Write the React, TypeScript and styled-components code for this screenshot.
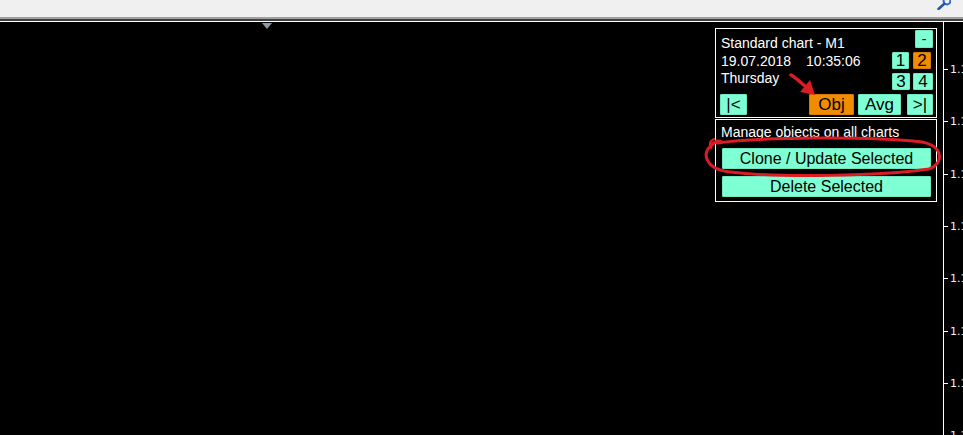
import React from "react";
import styled, { createGlobalStyle } from "styled-components";

const GlobalStyle = createGlobalStyle`
  html, body {
    margin: 0;
    padding: 0;
    background: #000;
    overflow: hidden;
  }
  body {
    font-family: "Liberation Sans", Arial, sans-serif;
  }
  * { box-sizing: border-box; }
`;

const Page = styled.div`
  width: 963px;
  height: 435px;
  display: flex;
  flex-direction: column;
  overflow: hidden;
`;

const Toolbar = styled.div`
  height: 19px;
  flex: none;
  background: #f0f0f0;
  border-bottom: 2px solid #a0a0a0;
  display: flex;
  justify-content: flex-end;
  align-items: flex-start;
  padding-right: 12px;
  overflow: hidden;
`;

const ChartFrame = styled.div`
  flex: 1;
  display: flex;
  flex-direction: column;
  border-top: 2px solid #404040;
  min-height: 0;
`;

const ChartRow = styled.div`
  flex: 1;
  display: flex;
  border-top: 1px solid #ffffff;
  min-height: 0;
`;

const Chart = styled.div`
  flex: 1;
  position: relative;
  display: flex;
  flex-direction: column;
  align-items: flex-end;
  padding: 6px 6px 0 0;
  background: #000;
`;

const ShiftMarker = styled.div`
  position: absolute;
  left: 262px;
  top: 1px;
  width: 0;
  height: 0;
  border-left: 5px solid transparent;
  border-right: 5px solid transparent;
  border-top: 6px solid #8b9aa6;
`;

const Panel = styled.div<{ $h: number; $gap?: number }>`
  width: 222px;
  height: ${(p) => p.$h}px;
  margin-top: ${(p) => p.$gap ?? 0}px;
  border: 1px solid #ffffff;
  background: #000;
  display: flex;
  flex-direction: column;
  color: #ffffff;
  position: relative;
  z-index: 1;
`;

const Header = styled.div`
  display: flex;
  justify-content: space-between;
  align-items: flex-start;
`;

const InfoText = styled.div`
  padding: 6px 0 0 5px;
  font-size: 14px;
  line-height: 17.5px;
  white-space: nowrap;
`;

const InfoLine = styled.div`
  display: flex;
  gap: 15px;
`;

const ButtonGrid = styled.div`
  display: grid;
  grid-template-columns: 18px 20px;
  grid-template-rows: 18px 17px 17px;
  column-gap: 3px;
  row-gap: 4px;
  margin: 1px 3px 0 0;
`;

const Footer = styled.div`
  margin-top: auto;
  display: flex;
  align-items: flex-end;
  padding: 0 3px 2px 4px;
`;

const Btn = styled.button<{
  $w?: number;
  $h?: number;
  $tone?: "aqua" | "orange";
  $size?: number;
  $ml?: number | "auto";
  $col?: number;
  $end?: boolean;
}>`
  width: ${(p) => (p.$w ? `${p.$w}px` : "100%")};
  height: ${(p) => p.$h ?? 21}px;
  margin: 0;
  margin-left: ${(p) =>
    p.$ml === "auto" ? "auto" : `${p.$ml ?? 0}px`};
  grid-column: ${(p) => p.$col ?? "auto"};
  justify-self: ${(p) => (p.$end ? "end" : "start")};
  padding: 0;
  border: 1px solid
    ${(p) => (p.$tone === "orange" ? "#d67a00" : "#6ee8c2")};
  border-radius: 1px;
  background: ${(p) => (p.$tone === "orange" ? "#f08c00" : "#7fffd4")};
  color: #000;
  font-family: "Liberation Sans", Arial, sans-serif;
  font-size: ${(p) => p.$size ?? 16}px;
  line-height: 1;
  display: flex;
  align-items: center;
  justify-content: center;
  white-space: nowrap;
  overflow: hidden;
  flex: none;
`;

const PanelTitle = styled.div`
  padding: 4px 0 0 5px;
  font-size: 14px;
  line-height: 16px;
  height: 20px;
  white-space: nowrap;
  overflow: hidden;
`;

const ActionList = styled.div`
  display: flex;
  flex-direction: column;
  gap: 7px;
  padding: 8px 5px 0 6px;
`;

const PriceAxis = styled.div`
  width: 20px;
  flex: none;
  position: relative;
  border-left: 1px solid #ffffff;
  overflow: hidden;
`;

const Tick = styled.div`
  position: absolute;
  left: 0;
  width: 4px;
  height: 1px;
  background: #ffffff;
`;

const PriceLabel = styled.div`
  position: absolute;
  left: 6px;
  font-family: "DejaVu Sans", Tahoma, sans-serif;
  font-size: 11px;
  line-height: 13px;
  color: #f2f2f2;
  white-space: nowrap;
`;

const Annotations = styled.svg`
  position: absolute;
  left: 0;
  top: 0;
  pointer-events: none;
  z-index: 2;
  overflow: visible;
`;

const SearchGlyph = () => (
  <svg width="14" height="10" viewBox="0 0 14 10" aria-hidden="true">
    <circle cx="10" cy="1" r="3.4" fill="none" stroke="#2f6cc9" strokeWidth="2" />
    <line x1="1.5" y1="9" x2="7.3" y2="3.8" stroke="#2458b0" strokeWidth="2.6" strokeLinecap="round" />
  </svg>
);

const prices = ["1.16650", "1.16600", "1.16550", "1.16500", "1.16450", "1.16400", "1.16350", "1.16300"];

export default function App() {
  return (
    <Page>
      <GlobalStyle />
      <Toolbar>
        <SearchGlyph />
      </Toolbar>
      <ChartFrame>
        <ChartRow>
          <Chart>
            <ShiftMarker />
            <Panel $h={90}>
              <Header>
                <InfoText>
                  <div>Standard chart - M1</div>
                  <InfoLine>
                    <span>19.07.2018</span>
                    <span>10:35:06</span>
                  </InfoLine>
                  <div>Thursday</div>
                </InfoText>
                <ButtonGrid>
                  <Btn $w={18} $h={18} $col={2} $end $size={14}>
                    -
                  </Btn>
                  <Btn $w={17} $h={17} $size={17}>
                    1
                  </Btn>
                  <Btn $w={18} $h={17} $size={17} $tone="orange">
                    2
                  </Btn>
                  <Btn $w={18} $h={17} $size={17}>
                    3
                  </Btn>
                  <Btn $w={20} $h={17} $size={17}>
                    4
                  </Btn>
                </ButtonGrid>
              </Header>
              <Footer>
                <Btn $w={27} $size={17}>|&lt;</Btn>
                <Btn $w={45} $size={17} $tone="orange" $ml="auto">
                  Obj
                </Btn>
                <Btn $w={43} $size={17} $ml={4}>
                  Avg
                </Btn>
                <Btn $w={26} $size={17} $ml={6}>
                  &gt;|
                </Btn>
              </Footer>
            </Panel>
            <Panel $h={83} $gap={1}>
              <PanelTitle>Manage objects on all charts</PanelTitle>
              <ActionList>
                <Btn $size={16}>Clone / Update Selected</Btn>
                <Btn $size={16}>Delete Selected</Btn>
              </ActionList>
            </Panel>
            <Annotations width="943" height="413" viewBox="0 22 943 413">
              {/* hand-drawn loop around the clone button */}
              <path
                d="M 717 143 C 760 137, 870 136, 922 142 C 944 146, 944 164, 929 169 C 880 176, 780 178, 730 172 C 704 169, 702 152, 711 146 C 714 142, 718 140, 722 142"
                fill="none"
                stroke="#dc1c24"
                strokeWidth="3"
                strokeLinecap="round"
                strokeLinejoin="round"
              />
              <path
                d="M 711 148 C 709 144, 710 141, 714 139"
                fill="none"
                stroke="#dc1c24"
                strokeWidth="2.5"
                strokeLinecap="round"
              />
              {/* arrow pointing at the Obj button */}
              <path
                d="M 791 75 C 795 77, 799 81, 805 86"
                fill="none"
                stroke="#dc1c24"
                strokeWidth="3.5"
                strokeLinecap="round"
              />
              <polygon points="815,95 800,92 810,80" fill="#dc1c24" />
            </Annotations>
          </Chart>
          <PriceAxis>
            {prices.map((p, i) => {
              const y = Math.round(47 + i * 52.3);
              return (
                <React.Fragment key={p}>
                  <Tick style={{ top: y }} />
                  <PriceLabel style={{ top: y - 6 }}>{p}</PriceLabel>
                </React.Fragment>
              );
            })}
          </PriceAxis>
        </ChartRow>
      </ChartFrame>
    </Page>
  );
}
